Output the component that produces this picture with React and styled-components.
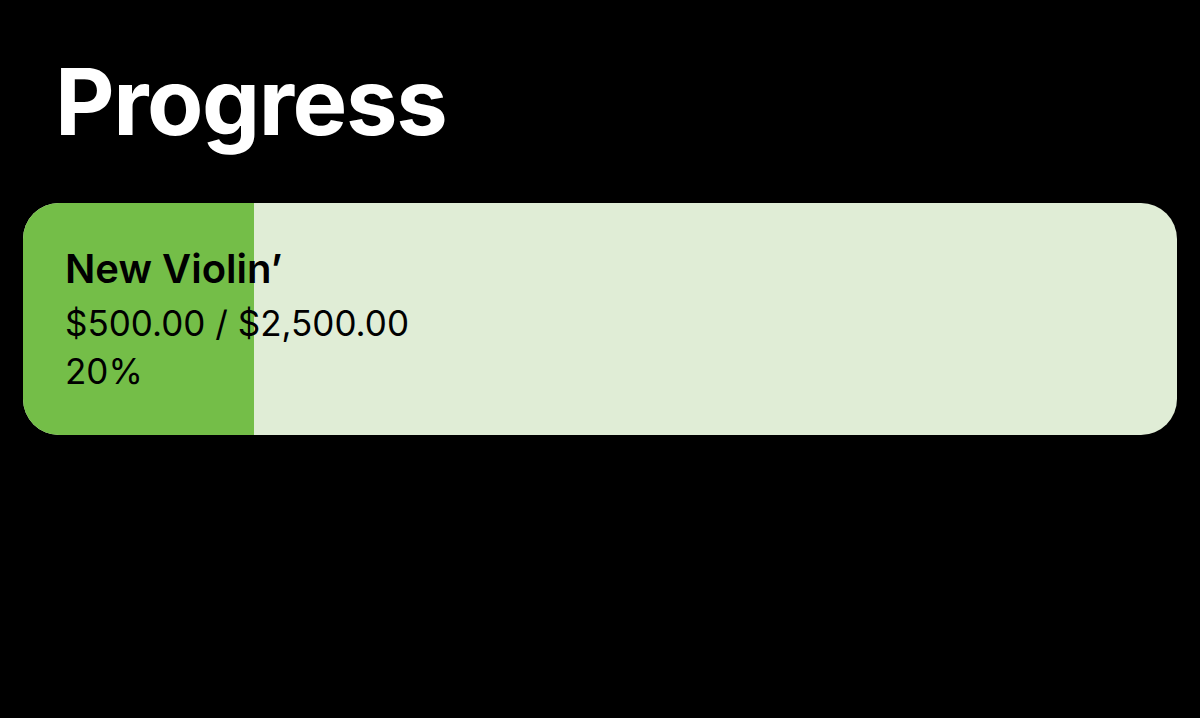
import React from 'react';
import styled, { createGlobalStyle } from 'styled-components';

const GlobalStyle = createGlobalStyle`
  html, body {
    margin: 0;
    padding: 0;
    background: #000;
  }
  body {
    font-family: Inter, "Liberation Sans", sans-serif;
    color: #000;
  }
`;

const Page = styled.div`
  min-height: 718px;
  background: #000;
  padding: 46px 23px 0;
  box-sizing: border-box;
`;

const Title = styled.h1`
  margin: 0 0 46px 32px;
  color: #fff;
  font-size: 92px;
  font-weight: 700;
  letter-spacing: -1.4px;
  line-height: 111px;
`;

const GoalCard = styled.div`
  position: relative;
  height: 232px;
  border-radius: 36px;
  overflow: hidden;
  background: #e0edd6;
`;

// the filled part of the card, width follows the saved amount
const Fill = styled.div`
  position: absolute;
  top: 0;
  left: 0;
  bottom: 0;
  background: #74be48;
`;

const Details = styled.div`
  position: relative;
  display: flex;
  flex-direction: column;
  padding: 41px 42px;
`;

const GoalName = styled.div`
  font-size: 40px;
  font-weight: 600;
  line-height: 50px;
  margin-bottom: 5px;
`;

const Line = styled.div`
  font-size: 35px;
  font-weight: 400;
  line-height: 48px;
`;

const goal = { name: 'New Violin’', saved: 500, target: 2500 };

const money = (n) =>
  '$' + n.toLocaleString('en-US', { minimumFractionDigits: 2, maximumFractionDigits: 2 });

export default function App() {
  const pct = Math.round((goal.saved / goal.target) * 100);
  return (
    <>
      <GlobalStyle />
      <Page>
        <Title>Progress</Title>
        <GoalCard>
          <Fill style={{ width: `${pct}%` }} />
          <Details>
            <GoalName>{goal.name}</GoalName>
            <Line>{money(goal.saved)} / {money(goal.target)}</Line>
            <Line>{pct}%</Line>
          </Details>
        </GoalCard>
      </Page>
    </>
  );
}
